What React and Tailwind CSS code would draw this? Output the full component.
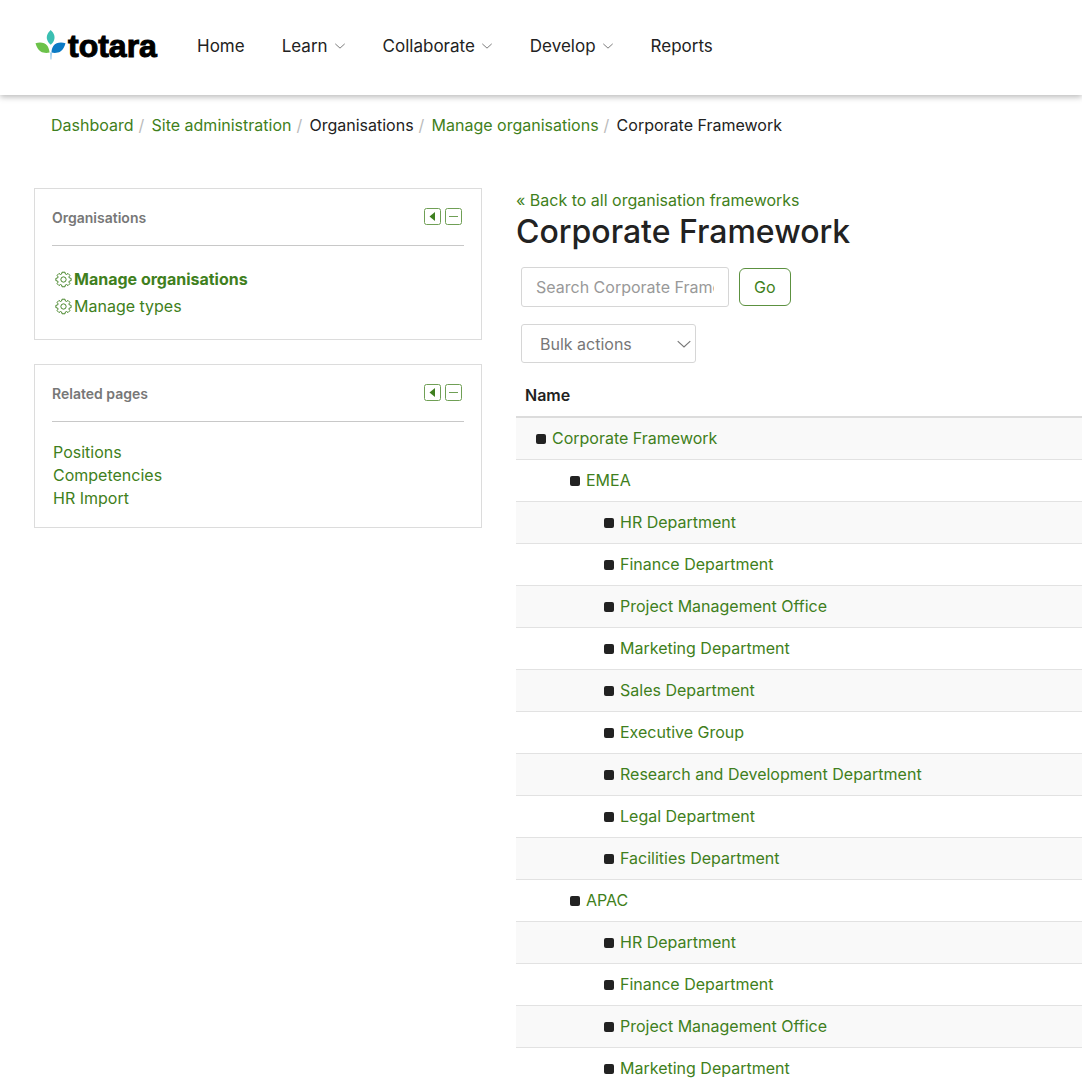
const nav = [
  { label: 'Home' },
  { label: 'Learn', menu: true },
  { label: 'Collaborate', menu: true },
  { label: 'Develop', menu: true },
  { label: 'Reports' },
];

const crumbs = [
  { label: 'Dashboard', link: true },
  { label: 'Site administration', link: true },
  { label: 'Organisations' },
  { label: 'Manage organisations', link: true },
  { label: 'Corporate Framework' },
];

const rows = [
  [0, 'Corporate Framework'],
  [1, 'EMEA'],
  [2, 'HR Department'],
  [2, 'Finance Department'],
  [2, 'Project Management Office'],
  [2, 'Marketing Department'],
  [2, 'Sales Department'],
  [2, 'Executive Group'],
  [2, 'Research and Development Department'],
  [2, 'Legal Department'],
  [2, 'Facilities Department'],
  [1, 'APAC'],
  [2, 'HR Department'],
  [2, 'Finance Department'],
  [2, 'Project Management Office'],
  [2, 'Marketing Department'],
];

const indents = ['pl-5', 'pl-[54px]', 'pl-[88px]'];

function Logo() {
  return (
    <a href="#" aria-label="totara" className="flex w-[125px] items-center gap-px">
      <svg viewBox="0 0 32 32" className="size-8 shrink-0" aria-hidden="true">
        <path d="M15.700 0C12.500 3 11 6.500 12.300 10c.7 2 2 3.600 3.400 4.800 1.500-1.200 2.700-2.800 3.400-4.800C20.400 6.500 18.900 3 15.700 0Z" fill="#3bbfb2" />
        <path d="M.500 13.200c4.900-1.200 9.400-.6 11.800 2.500 1.300 1.800 2 4.300 2.300 6.900-3.200.6-6.600.4-8.900-1.100C3 19.800 1.500 16.500.500 13.200Z" fill="#6cc24a" />
        <path d="M30.500 13.200c-4.900-1.200-9.600-.6-12 2.500-1.300 1.800-1.900 4-2 6.900 3.200.6 6.600.4 8.900-1.100 2.700-1.700 4.100-5 5.100-8.300Z" fill="#0b7ac4" />
        <path d="M15.200 22.500h1.700L16.400 29.500h-.9Z" fill="#8cc4e8" />
      </svg>
      <span className="font-['Liberation_Sans',sans-serif] text-[32px] leading-8 font-bold text-black [-webkit-text-stroke:1px_black]">totara</span>
    </a>
  );
}

function Chevron({ className }) {
  return (
    <svg viewBox="0 0 14 14" className={className} fill="none" stroke="currentColor" aria-hidden="true">
      <path d="M1.500 4.500 7 9.500l5.500-5" />
    </svg>
  );
}

function Gear() {
  return (
    <svg viewBox="0 0 18 18" className="size-[17px] shrink-0" fill="none" stroke="currentColor" strokeLinejoin="round" aria-hidden="true">
      <path d="M7.400 1.300h3.200l.4 1.900 1.100.5 1.700-1.100 2 2-1.100 1.700.5 1.100 1.900.4v2.400l-1.900.4-.5 1.100 1.100 1.700-2 2-1.700-1.100-1.100.5-.4 1.900H7.400L7 14.800l-1.100-.5-1.700 1.100-2-2 1.100-1.700-.5-1.100-1.900-.4V7.800l1.900-.4.500-1.100-1.100-1.700 2-2 1.700 1.100L7 3.200Z" />
      <circle cx="9" cy="9" r="2.800" />
    </svg>
  );
}

function Panel({ title, children }) {
  return (
    <section className="border border-[#dcdcdc] px-[17px] pt-[17px]">
      <header className="flex items-start justify-between border-b border-[#c8c8c8] pb-[15px]">
        <h2 className="text-sm leading-6 font-semibold text-[#777]">{title}</h2>
        <div className="flex gap-1 pr-0.5 pt-0.5 text-[#3f7f20]">
          <button type="button" aria-label={`Dock ${title}`}>
            <svg viewBox="0 0 17 17" className="size-[17px]" fill="none" aria-hidden="true">
              <rect x=".5" y=".5" width="16" height="16" rx="2" stroke="#6f9f55" />
              <path d="M11 4v9L5.500 8.500Z" fill="currentColor" />
            </svg>
          </button>
          <button type="button" aria-label={`Hide ${title}`}>
            <svg viewBox="0 0 17 17" className="size-[17px]" fill="none" aria-hidden="true">
              <rect x=".5" y=".5" width="16" height="16" rx="2" stroke="#6f9f55" />
              <path d="M4 8.500h9" stroke="#6f9f55" />
            </svg>
          </button>
        </div>
      </header>
      {children}
    </section>
  );
}

export default function App() {
  return (
    <div className="min-h-screen overflow-hidden bg-white font-[Inter,sans-serif] text-base text-[#222]">
      <header className="flex h-[95px] items-center bg-white px-[35px] pb-1 shadow-[0_2px_6px_rgba(0,0,0,0.28)]">
        <Logo />
        <nav className="flex pl-[37px] text-[17px] leading-6">
          {nav.map((n) => (
            <a key={n.label} href="#" className="mr-[37px] flex items-center gap-[6px]">
              {n.label}
              {n.menu && <Chevron className="size-3 text-[#666]" />}
            </a>
          ))}
        </nav>
      </header>

      <nav aria-label="Breadcrumb" className="px-[51px] pt-[18px]">
        <ol className="flex leading-6">
          {crumbs.map((c, i) => (
            <li key={c.label} className="flex">
              {i > 0 && <span className="w-[18px] pl-[5px] text-[#bbb]">/</span>}
              {c.link ? <a href="#" className="text-[#3f7f20]">{c.label}</a> : <span>{c.label}</span>}
            </li>
          ))}
        </ol>
      </nav>

      <div className="grid grid-cols-[448fr_566fr] gap-x-[34px] pl-[34px] pt-[51px]">
        <aside className="flex flex-col gap-6">
          <Panel title="Organisations">
            <ul className="pt-5 pb-[19px] pl-[3px] text-[#3f7f20]">
              <li>
                <a href="#" className="flex items-center gap-0.5 leading-[27px] font-bold"><Gear />Manage organisations</a>
              </li>
              <li>
                <a href="#" className="flex items-center gap-0.5 leading-[27px]"><Gear />Manage types</a>
              </li>
            </ul>
          </Panel>
          <Panel title="Related pages">
            <ul className="pt-[19px] pb-[17px] pl-px leading-[23px] text-[#3f7f20]">
              {['Positions', 'Competencies', 'HR Import'].map((p) => (
                <li key={p}><a href="#">{p}</a></li>
              ))}
            </ul>
          </Panel>
        </aside>

        <main>
          <a href="#" className="block leading-6 text-[#3f7f20]">« Back to all organisation frameworks</a>
          <h1 className="text-[32px] leading-10 font-medium">Corporate Framework</h1>
          <form className="pt-[15px] pl-[5px]" onSubmit={(e) => e.preventDefault()}>
            <div className="flex items-center gap-[10px]">
              <input type="text" aria-label="Search Corporate Framework" placeholder="Search Corporate Framework" className="h-10 w-[208px] rounded-[3px] border border-[#d6d6d6] px-[14px] placeholder:text-[#999]" />
              <button type="submit" className="h-[38px] rounded-md border border-[#5c9140] px-[14px] text-[#3f7f20]">Go</button>
            </div>
            <div className="relative mt-[17px] w-[175px] text-[#777]">
              <select aria-label="Bulk actions" className="block h-[39px] w-full appearance-none rounded-[3px] border border-[#d6d6d6] bg-white px-[18px]">
                <option>Bulk actions</option>
              </select>
              <Chevron className="pointer-events-none absolute top-3 right-1 size-4" />
            </div>
          </form>
          <table className="mt-3 w-full border-collapse">
            <thead>
              <tr className="h-[42px] border-b-2 border-[#dcdcdc]">
                <th scope="col" className="pb-0.5 pl-[9px] text-left font-semibold">Name</th>
              </tr>
            </thead>
            <tbody>
              {rows.map(([level, name], i) => (
                <tr key={i} className="h-[42px] border-b border-[#e2e2e2] odd:bg-[#f9f9f9]">
                  <td className={indents[level]}>
                    <span className="flex items-center gap-[6px]">
                      <span className="mt-0.5 size-[10px] shrink-0 rounded-[2px] bg-[#222]" />
                      <a href="#" className="text-[#3f7f20]">{name}</a>
                    </span>
                  </td>
                </tr>
              ))}
            </tbody>
          </table>
        </main>
      </div>
    </div>
  );
}
